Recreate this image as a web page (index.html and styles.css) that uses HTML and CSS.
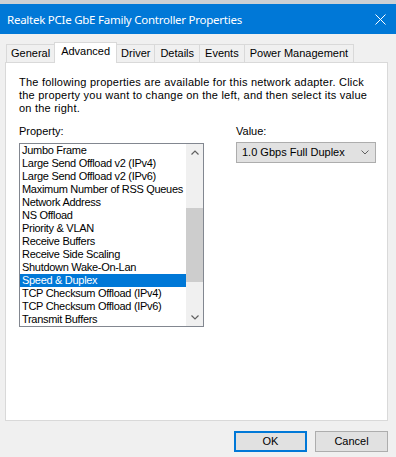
FILE: index.html
```html
<!DOCTYPE html>
<html>
<head>
<meta charset="utf-8">
<link rel="stylesheet" href="styles.css">
</head>
<body>
<div class="topstrip"></div>
<div class="titlebar">
  <span class="title">Realtek PCIe GbE Family Controller Properties</span>
  <svg class="close" width="11" height="11" viewBox="0 0 11 11"><path d="M0.5 0.5 L10.5 10.5 M10.5 0.5 L0.5 10.5" stroke="#fff" stroke-width="1" fill="none"/></svg>
</div>
<div class="dialog">
  <div class="tabs">
    <div class="tab">General</div>
    <div class="tab active">Advanced</div>
    <div class="tab">Driver</div>
    <div class="tab wide">Details</div>
    <div class="tab wide">Events</div>
    <div class="tab wide">Power Management</div>
  </div>
  <div class="panel">
    <p class="intro">The following properties are available for this network adapter. Click<br>the property you want to change on the left, and then select its value<br>on the right.</p>
    <div class="cols">
      <div class="col-left">
        <div class="label">Property:</div>
        <div class="listbox">
          <ul class="items">
            <li>Jumbo Frame</li>
            <li>Large Send Offload v2 (IPv4)</li>
            <li>Large Send Offload v2 (IPv6)</li>
            <li>Maximum Number of RSS Queues</li>
            <li>Network Address</li>
            <li>NS Offload</li>
            <li>Priority &amp; VLAN</li>
            <li>Receive Buffers</li>
            <li>Receive Side Scaling</li>
            <li>Shutdown Wake-On-Lan</li>
            <li class="selected">Speed &amp; Duplex</li>
            <li>TCP Checksum Offload (IPv4)</li>
            <li>TCP Checksum Offload (IPv6)</li>
            <li>Transmit Buffers</li>
          </ul>
          <div class="scrollbar">
            <div class="sb-btn"><svg width="8" height="5" viewBox="0 0 8 5"><path d="M0.5 4.5 L4 1 L7.5 4.5" stroke="#606060" stroke-width="1.2" fill="none"/></svg></div>
            <div class="sb-track"><div class="sb-thumb"></div></div>
            <div class="sb-btn"><svg width="8" height="5" viewBox="0 0 8 5"><path d="M0.5 0.5 L4 4 L7.5 0.5" stroke="#606060" stroke-width="1.2" fill="none"/></svg></div>
          </div>
        </div>
      </div>
      <div class="col-right">
        <div class="label">Value:</div>
        <div class="select">
          <span>1.0 Gbps Full Duplex</span>
          <svg width="8" height="5" viewBox="0 0 8 5"><path d="M0.5 0.5 L4 4 L7.5 0.5" stroke="#606060" stroke-width="1" fill="none"/></svg>
        </div>
      </div>
    </div>
  </div>
  <div class="buttons">
    <button class="btn default">OK</button>
    <button class="btn">Cancel</button>
  </div>
</div>
</body>
</html>
```
FILE: styles.css
```css
* { box-sizing: border-box; }
html, body { margin: 0; padding: 0; }
body {
  width: 396px;
  height: 457px;
  background: #f0f0f0;
  font-family: "Liberation Sans", Arial, sans-serif;
  font-size: 11px;
  color: #000;
  overflow: hidden;
}
.topstrip { height: 4px; background: #ccd0d4; }
.titlebar {
  height: 30px;
  background: #0078d7;
  display: flex;
  align-items: center;
  justify-content: space-between;
  padding: 0 10px 0 7px;
}
.title {
  color: #fff;
  font-family: "Noto Sans", "Open Sans", sans-serif;
  font-size: 11.5px;
  letter-spacing: -0.25px;
  line-height: 16px;
  padding-top: 2px;
}
.close { display: block; margin-top: 1px; }
.dialog { padding-top: 8px; }
.tabs {
  display: flex;
  align-items: flex-end;
  height: 20px;
  padding-left: 6px;
  position: relative;
  z-index: 1;
}
.tab {
  height: 18px;
  border: 1px solid #d9d9d9;
  border-bottom: none;
  border-left: none;
  background: #f0f0f0;
  padding: 2px 4px 0 4px;
  line-height: 13px;
  white-space: nowrap;
}
.tab.wide { padding: 2px 5px 0 5px; }
.tab:first-child { border-left: 1px solid #d9d9d9; }
.tab.active {
  height: 21px;
  margin-bottom: -1px;
  background: #fff;
  padding: 2px 6px 0 6px;
  border-left: 1px solid #d9d9d9;
  margin-left: -1px;
}
.tab.active + .tab { border-left: none; }
.panel {
  margin-left: 5px;
  width: 383px;
  height: 359px;
  background: #fff;
  border: 1px solid #d9d9d9;
  padding: 13px 13px 0 13px;
}
.intro { margin: 0; line-height: 13px; white-space: nowrap; letter-spacing: 0.22px; }
.cols { display: flex; gap: 32px; margin-top: 10px; }
.label { line-height: 13px; }
.col-left { width: 185px; }
.listbox {
  margin-top: 5px;
  width: 185px;
  height: 184px;
  border: 1px solid #828790;
  display: flex;
  background: #fff;
}
.items {
  list-style: none;
  margin: 0;
  padding: 0;
  flex: 1;
  min-width: 0;
  overflow: hidden;
}
.items li {
  height: 13px;
  line-height: 13px;
  padding-left: 2px;
  white-space: nowrap;
  letter-spacing: -0.3px;
}
.items li.selected { background: #0078d7; color: #fff; }
.scrollbar {
  width: 17px;
  flex: none;
  background: #f0f0f0;
  display: flex;
  flex-direction: column;
}
.sb-btn {
  height: 17px;
  display: flex;
  align-items: center;
  justify-content: center;
}
.sb-track { flex: 1; padding-top: 47px; }
.sb-thumb { height: 74px; background: #cdcdcd; }
.col-right { width: 140px; }
.select {
  margin-top: 4px;
  height: 21px;
  width: 140px;
  border: 1px solid #adadad;
  background: #e1e1e1;
  display: flex;
  align-items: center;
  justify-content: space-between;
  padding: 0 6px 0 5px;
  line-height: 13px;
}
.select svg { display: block; }
.buttons {
  display: flex;
  justify-content: flex-end;
  gap: 8px;
  width: 388px;
  margin-top: 10px;
}
.btn {
  width: 73px;
  height: 21px;
  border: 1px solid #adadad;
  background: #e1e1e1;
  font-family: "Liberation Sans", Arial, sans-serif;
  font-size: 11px;
  color: #000;
  padding: 0;
  line-height: 13px;
}
.btn.default { border: 2px solid #0078d7; }
```
